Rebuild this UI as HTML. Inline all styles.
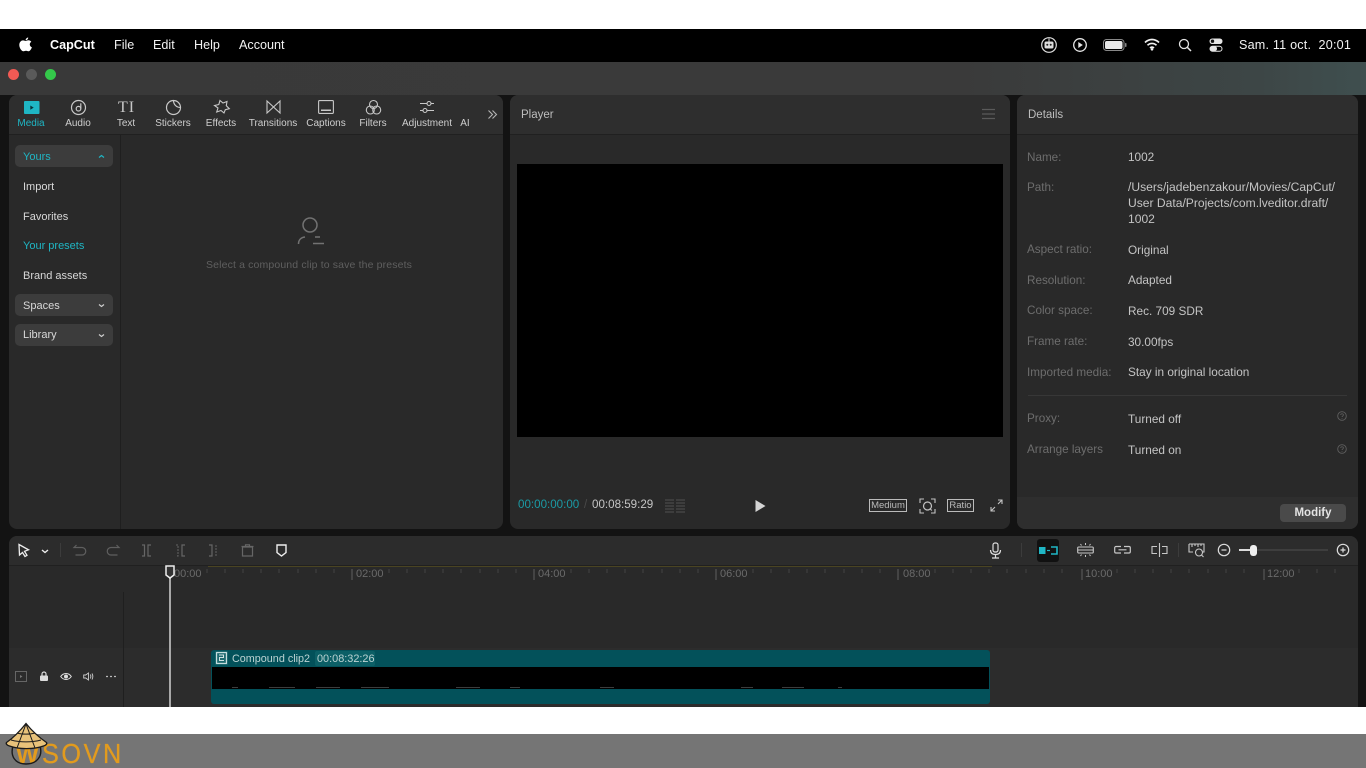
<!DOCTYPE html>
<html><head><meta charset="utf-8">
<style>
html,body{margin:0;padding:0;background:#fff;}
#r{position:relative;width:1366px;height:768px;overflow:hidden;background:#fff;font-family:"Liberation Sans",sans-serif;}
#r div,#r span.a,#r svg.a{position:absolute;}
.t{white-space:nowrap;line-height:14px;}
.m{font-size:12.6px;color:#f2f2f2;top:38px;line-height:14px;white-space:nowrap;}
.tab{font-size:10px;color:#cfcfcf;top:118px;width:70px;text-align:center;white-space:nowrap;line-height:12px;}
.side{font-size:11px;color:#d8d8d8;left:23px;line-height:13px;white-space:nowrap;}
.btn{left:15px;width:98px;height:22px;background:#3c3c3c;border-radius:5px;}
.k{font-size:11.7px;color:#6d6d6d;left:1027px;line-height:14px;white-space:nowrap;margin-top:1px;}
.v{font-size:11.8px;color:#c4c4c4;left:1128px;line-height:16px;white-space:nowrap;}
.tl{font-size:11px;color:#6a6a6a;top:568px;line-height:12px;white-space:nowrap;}
svg{fill:none;overflow:visible;}
</style></head><body>
<div id="r">
<div style="left:0;top:29px;width:1366px;height:33px;background:#000"></div>
<div style="left:0;top:62px;width:1366px;height:33px;background:linear-gradient(90deg,#393939 0%,#3a3a3a 70%,#3d4646 92%,#3f4f4f 100%)"></div>
<div style="left:0;top:95px;width:1366px;height:612px;background:#131313"></div>

<svg class="a" style="left:18px;top:37px" width="15" height="15" viewBox="0 0 15 15"><path fill="#fff" d="M10.2 0.5c.1 1.2-1 2.8-2.6 2.8C7.5 2 8.8.6 10.2.5zM7.6 4c.8 0 1.6-.7 2.9-.7 1 0 2.1.5 2.8 1.5-2.3 1.4-1.9 4.6.6 5.6-.6 1.6-2 3.9-3.3 3.9-1 0-1.4-.6-2.6-.6s-1.7.6-2.6.6C3.500 14.300 1.300 10.800 1.300 8c0-2.900 1.900-4.600 3.700-4.600 1.100 0 2 .6 2.600.6z"/></svg>
<div class="m" style="left:50px;font-weight:bold;color:#fff">CapCut</div>
<div class="m" style="left:114px">File</div>
<div class="m" style="left:153px">Edit</div>
<div class="m" style="left:194px">Help</div>
<div class="m" style="left:239px">Account</div>

<svg class="a" style="left:1040px;top:36px" width="18" height="18" viewBox="0 0 18 18"><circle cx="9" cy="9" r="7.300" stroke="#ddd" stroke-width="1.200"/><path d="M9 2.500v3" stroke="#ddd"/><rect x="4.500" y="5.500" width="9" height="7" rx="1.500" fill="#ddd"/><circle cx="7.300" cy="8.800" r="1" fill="#222"/><circle cx="10.700" cy="8.800" r="1" fill="#222"/></svg>
<svg class="a" style="left:1072px;top:37px" width="16" height="16" viewBox="0 0 16 16"><circle cx="8" cy="8" r="6.300" stroke="#e5e5e5" stroke-width="1.300"/><path d="M6.300 5l4.500 3-4.500 3z" fill="#e5e5e5"/></svg>
<svg class="a" style="left:1103px;top:39px" width="24" height="12" viewBox="0 0 24 12"><rect x=".5" y=".5" width="20.500" height="11" rx="3" stroke="#888"/><rect x="2" y="2" width="17.500" height="8" rx="1.800" fill="#e8e8e8"/><rect x="22" y="4" width="1.500" height="4" rx=".7" fill="#888"/></svg>
<svg class="a" style="left:1144px;top:38px" width="16" height="13" viewBox="0 0 16 13"><path d="M1 4.500c4-4 10-4 14 0M3.500 7.300c2.600-2.500 6.400-2.500 9 0M6 10c1.200-1 2.800-1 4 0" stroke="#f0f0f0" stroke-width="1.700"/><circle cx="8" cy="11.300" r="1.300" fill="#f0f0f0"/></svg>
<svg class="a" style="left:1178px;top:38px" width="14" height="14" viewBox="0 0 14 14"><circle cx="6" cy="6" r="4.500" stroke="#e5e5e5" stroke-width="1.300"/><path d="M9.300 9.300l3.700 3.700" stroke="#e5e5e5" stroke-width="1.500"/></svg>
<svg class="a" style="left:1209px;top:38px" width="14" height="14" viewBox="0 0 14 14"><rect x=".5" y=".5" width="13" height="5.500" rx="2.700" fill="#e5e5e5"/><circle cx="3.500" cy="3.200" r="1.700" fill="#111"/><rect x="1" y="8.200" width="12" height="5" rx="2.500" stroke="#e5e5e5"/><rect x="1" y="8.200" width="7" height="5" rx="2.500" fill="#e5e5e5"/></svg>
<div class="m" style="left:1239px;letter-spacing:.2px">Sam. 11 oct.&nbsp; 20:01</div>

<div style="left:8px;top:69px;width:11px;height:11px;border-radius:50%;background:#f25a54"></div>
<div style="left:26px;top:69px;width:11px;height:11px;border-radius:50%;background:#5a5a5a"></div>
<div style="left:45px;top:69px;width:11px;height:11px;border-radius:50%;background:#34c84a"></div>

<!-- media panel -->
<div style="left:9px;top:95px;width:494px;height:434px;background:#292929;border-radius:8px"></div>
<div style="left:9px;top:95px;width:494px;height:39px;background:#2e2e2e;border-radius:8px 8px 0 0;border-bottom:1px solid #202020"></div>
<div style="left:120px;top:135px;width:1px;height:394px;background:#1f1f1f"></div>

<svg class="a" style="left:24px;top:101px" width="16" height="13" viewBox="0 0 16 13"><rect width="15.500" height="13" rx="1" fill="#1fb6c4"/><path d="M6.300 4.500l3.400 2.100-3.400 2.100z" fill="#0c3338"/></svg>
<svg class="a" style="left:70px;top:99px" width="17" height="17" viewBox="0 0 17 17"><circle cx="8.500" cy="8.500" r="7" stroke="#c8c8c8" stroke-width="1.200"/><circle cx="8.500" cy="9.700" r="2.300" stroke="#c8c8c8" stroke-width="1.200"/><path d="M10.800 9.500V4.300" stroke="#c8c8c8" stroke-width="1.200"/></svg>
<div class="a t" style="left:118px;top:99px;font-family:'Liberation Serif',serif;font-size:16px;line-height:17px;color:#c8c8c8;letter-spacing:1px">TI</div>
<svg class="a" style="left:165px;top:99px" width="17" height="17" viewBox="0 0 17 17"><path d="M8.500 1.500a7 7 0 1 0 7 7c-4 0-7-3-7-7zM8.500 1.500a7 7 0 0 1 7 7" stroke="#c8c8c8" stroke-width="1.200"/></svg>
<svg class="a" style="left:213px;top:99px" width="18" height="17" viewBox="0 0 18 17"><path d="M7 1.500l3 2.500 4-1.500-.7 4.200 3 3-4 1-1.300 3.300-3-2.500-4.300 1.500 1.300-4-3.500-2.500 4.300-1z" stroke="#c8c8c8" stroke-width="1.100"/></svg>
<svg class="a" style="left:266px;top:100px" width="15" height="14" viewBox="0 0 15 14"><path d="M1 1v12l6.500-6zM14 1v12L7.500 7z" stroke="#c8c8c8" stroke-width="1.100"/></svg>
<svg class="a" style="left:318px;top:100px" width="16" height="14" viewBox="0 0 16 14"><rect x=".6" y=".6" width="14.800" height="12.800" rx="1" stroke="#c8c8c8" stroke-width="1.100"/><path d="M3 9.500h10v1.500H3z" fill="#c8c8c8"/></svg>
<svg class="a" style="left:365px;top:99px" width="17" height="17" viewBox="0 0 17 17"><circle cx="8.500" cy="5.500" r="4" stroke="#c8c8c8" stroke-width="1.100"/><circle cx="5.300" cy="11" r="4" stroke="#c8c8c8" stroke-width="1.100"/><circle cx="11.700" cy="11" r="4" stroke="#c8c8c8" stroke-width="1.100"/></svg>
<svg class="a" style="left:419px;top:99px" width="16" height="16" viewBox="0 0 16 16"><path d="M1 4.500h7M12 4.500h3M1 11.500h3M8 11.500h7" stroke="#c8c8c8" stroke-width="1.100"/><circle cx="10" cy="4.500" r="2" stroke="#c8c8c8" stroke-width="1.100"/><circle cx="6" cy="11.500" r="2" stroke="#c8c8c8" stroke-width="1.100"/></svg>
<svg class="a" style="left:487px;top:109px" width="11" height="11" viewBox="0 0 11 11"><path d="M1.500 1.500l4 4-4 4M5.500 1.500l4 4-4 4" stroke="#b5b5b5" stroke-width="1.100"/></svg>

<div class="tab" style="left:-4px;color:#1fb6c4">Media</div>
<div class="tab" style="left:43px">Audio</div>
<div class="tab" style="left:91px">Text</div>
<div class="tab" style="left:138px">Stickers</div>
<div class="tab" style="left:186px">Effects</div>
<div class="tab" style="left:238px">Transitions</div>
<div class="tab" style="left:291px">Captions</div>
<div class="tab" style="left:338px">Filters</div>
<div class="tab" style="left:392px">Adjustment</div>
<div class="tab" style="left:430px">AI</div>

<div class="btn" style="top:145px"></div>
<div class="btn" style="top:294px"></div>
<div class="btn" style="top:324px"></div>
<div class="side" style="top:151px;color:#1fb6c4">Yours</div>
<div class="side" style="top:181px">Import</div>
<div class="side" style="top:211px">Favorites</div>
<div class="side" style="top:240px;color:#1fb6c4">Your presets</div>
<div class="side" style="top:270px">Brand assets</div>
<div class="side" style="top:300px">Spaces</div>
<div class="side" style="top:329px">Library</div>
<svg class="a" style="left:98px;top:154px" width="7" height="5" viewBox="0 0 7 5"><path d="M1 3.500l2.500-2 2.500 2" stroke="#1fb6c4" stroke-width="1.200"/></svg>
<svg class="a" style="left:98px;top:303px" width="7" height="5" viewBox="0 0 7 5"><path d="M1 1.500l2.500 2 2.500-2" stroke="#cfcfcf" stroke-width="1.200"/></svg>
<svg class="a" style="left:98px;top:333px" width="7" height="5" viewBox="0 0 7 5"><path d="M1 1.500l2.500 2 2.500-2" stroke="#cfcfcf" stroke-width="1.200"/></svg>

<svg class="a" style="left:297px;top:216px" width="28" height="30" viewBox="0 0 28 30"><circle cx="13" cy="9" r="7" stroke="#727272" stroke-width="1.500"/><path d="M1.500 28c0-4 2.500-6.500 6.500-7M18 21h5M16 27.500h11" stroke="#727272" stroke-width="1.500"/></svg>
<div class="a t" style="left:206px;top:258px;font-size:10.500px;color:#5f5f5f;letter-spacing:.14px">Select a compound clip to save the presets</div>

<!-- player -->
<div style="left:510px;top:95px;width:500px;height:434px;background:#292929;border-radius:8px"></div>
<div style="left:510px;top:95px;width:500px;height:39px;background:#2e2e2e;border-radius:8px 8px 0 0;border-bottom:1px solid #202020"></div>
<div class="a t" style="left:521px;top:108px;font-size:11.500px;color:#bdbdbd">Player</div>
<svg class="a" style="left:982px;top:108px" width="13" height="12" viewBox="0 0 13 12"><path d="M0 1.500h13M0 6h13M0 10.500h13" stroke="#5a5a5a" stroke-width="1.200"/></svg>
<div style="left:517px;top:164px;width:486px;height:273px;background:#000"></div>
<div class="a t" style="left:518px;top:498px;font-size:11.600px;color:#1b9aa5">00:00:00:00</div>
<div class="a t" style="left:584px;top:498px;font-size:11.500px;color:#4a4a4a">/</div>
<div class="a t" style="left:592px;top:498px;font-size:11.600px;color:#c4c4c4">00:08:59:29</div>
<svg class="a" style="left:664px;top:498px" width="22" height="16" viewBox="0 0 22 16"><path d="M1 2h9M1 5h9M1 8h9M1 11h9M1 14h9M12 2h9M12 5h9M12 8h9M12 11h9M12 14h9" stroke="#444" stroke-width="1.500"/></svg>
<svg class="a" style="left:755px;top:500px" width="11" height="12" viewBox="0 0 11 12"><path d="M.5 0l10 6-10 6z" fill="#d5d5d5"/></svg>
<div class="a t" style="left:869px;top:499px;width:36px;height:11px;border:1px solid #bbb;font-size:9.500px;line-height:11px;color:#bbb;text-align:center">Medium</div>
<svg class="a" style="left:919px;top:498px" width="17" height="16" viewBox="0 0 17 16"><path d="M1 5V1h4M12 1h4v4M16 11v4h-4M5 15H1v-4" stroke="#c4c4c4" stroke-width="1.100"/><circle cx="8.500" cy="8" r="4" stroke="#c4c4c4" stroke-width="1.200"/><path d="M10.800 10.500l2 2" stroke="#c4c4c4" stroke-width="1.100"/></svg>
<div class="a t" style="left:947px;top:499px;width:25px;height:11px;border:1px solid #bbb;font-size:9.500px;line-height:11px;color:#bbb;text-align:center">Ratio</div>
<svg class="a" style="left:990px;top:499px" width="13" height="13" viewBox="0 0 13 13"><path d="M8 1h4v4M12 1L8 5M5 12H1V8M1 12l4-4" stroke="#c4c4c4" stroke-width="1.100"/></svg>

<!-- details -->
<div style="left:1017px;top:95px;width:341px;height:434px;background:#292929;border-radius:8px"></div>
<div style="left:1017px;top:95px;width:341px;height:39px;background:#2e2e2e;border-radius:8px 8px 0 0;border-bottom:1px solid #202020"></div>
<div style="left:1017px;top:497px;width:341px;height:32px;background:#2e2e2e;border-radius:0 0 8px 8px"></div>
<div class="a t" style="left:1028px;top:108px;font-size:11.500px;color:#bdbdbd">Details</div>
<div class="k" style="top:150px">Name:</div><div class="v" style="top:149px">1002</div>
<div class="k" style="top:180px">Path:</div>
<div class="v" style="top:179px;font-size:12.1px">/Users/jadebenzakour/Movies/CapCut/<br>User Data/Projects/com.lveditor.draft/<br>1002</div>
<div class="k" style="top:242px">Aspect ratio:</div><div class="v" style="top:242px">Original</div>
<div class="k" style="top:273px">Resolution:</div><div class="v" style="top:272px">Adapted</div>
<div class="k" style="top:303px">Color space:</div><div class="v" style="top:303px">Rec. 709 SDR</div>
<div class="k" style="top:334px">Frame rate:</div><div class="v" style="top:334px">30.00fps</div>
<div class="k" style="top:365px">Imported media:</div><div class="v" style="top:364px">Stay in original location</div>
<div style="left:1028px;top:395px;width:319px;height:1px;background:#373737"></div>
<div class="k" style="top:411px">Proxy:</div><div class="v" style="top:411px">Turned off</div>
<div class="k" style="top:442px">Arrange layers</div><div class="v" style="top:442px">Turned on</div>
<svg class="a" style="left:1337px;top:411px" width="10" height="10" viewBox="0 0 10 10"><circle cx="5" cy="5" r="4.300" stroke="#5f5f5f" stroke-width=".9"/><path d="M3.700 4c0-1.700 2.700-1.700 2.700 0 0 1-1.400 1-1.400 2M5 7v.8" stroke="#5f5f5f" stroke-width=".8"/></svg>
<svg class="a" style="left:1337px;top:444px" width="10" height="10" viewBox="0 0 10 10"><circle cx="5" cy="5" r="4.300" stroke="#5f5f5f" stroke-width=".9"/><path d="M3.700 4c0-1.700 2.700-1.700 2.700 0 0 1-1.400 1-1.400 2M5 7v.8" stroke="#5f5f5f" stroke-width=".8"/></svg>
<div class="a t" style="left:1280px;top:504px;width:66px;height:18px;line-height:18px;background:#4a4a4a;border-radius:4px;color:#e4e4e4;font-size:11.500px;font-weight:bold;text-align:center">Modify</div>

<!-- timeline -->
<div style="left:9px;top:536px;width:1349px;height:171px;background:#292929;border-radius:8px 8px 0 0"></div>
<div style="left:9px;top:536px;width:1349px;height:29px;background:#2c2c2c;border-radius:8px 8px 0 0;border-bottom:1px solid #202020"></div>
<div style="left:9px;top:648px;width:1349px;height:59px;background:#2c2c2c"></div>
<div style="left:123px;top:592px;width:1px;height:115px;background:#1f1f1f"></div>
<div style="left:208px;top:566px;width:784px;height:1px;background:#4a4422"></div>

<svg class="a" style="left:17px;top:543px" width="14" height="15" viewBox="0 0 14 15"><path d="M2 1.500l9.500 5.300-4 1.500 2.500 4-2 1.200-2.500-4-3 2.500z" stroke="#eee" stroke-width="1.300"/></svg>
<svg class="a" style="left:41px;top:549px" width="8" height="5" viewBox="0 0 8 5"><path d="M1 1l3 2.500L7 1" stroke="#eee" stroke-width="1.400"/></svg>
<div style="left:60px;top:543px;width:1px;height:14px;background:#3c3c3c"></div>
<svg class="a" style="left:73px;top:544px" width="13" height="12" viewBox="0 0 13 12"><path d="M3.500 1L1 3.500h8a3.500 3.500 0 0 1 0 7.500H2.500" stroke="#5f5f5f" stroke-width="1.200"/></svg>
<svg class="a" style="left:107px;top:544px" width="13" height="12" viewBox="0 0 13 12"><path d="M9.500 1L12 3.500H4a3.500 3.500 0 0 0 0 7.500h6.500" stroke="#5f5f5f" stroke-width="1.200"/></svg>
<svg class="a" style="left:141px;top:544px" width="11" height="13" viewBox="0 0 11 13"><path d="M1 1h2.500v11H1M10 1H7v11h3" stroke="#666" stroke-width="1.200"/></svg>
<svg class="a" style="left:175px;top:544px" width="11" height="13" viewBox="0 0 11 13"><path d="M1 1h2v11H1" stroke="#5a5a5a" stroke-width="1.200" stroke-dasharray="2 1"/><path d="M10 1H7v11h3" stroke="#666" stroke-width="1.200"/></svg>
<svg class="a" style="left:208px;top:544px" width="11" height="13" viewBox="0 0 11 13"><path d="M1 1h3v11H1" stroke="#666" stroke-width="1.200"/><path d="M8 1v11" stroke="#5a5a5a" stroke-width="1.200" stroke-dasharray="2 1"/></svg>
<svg class="a" style="left:241px;top:544px" width="13" height="13" viewBox="0 0 13 13"><path d="M1.500 3h10v9h-10zM.5 2.500h12M4.500 2.500V.8h4v1.700" stroke="#666" stroke-width="1.200"/></svg>
<svg class="a" style="left:276px;top:544px" width="11" height="13" viewBox="0 0 11 13"><path d="M1 1h9v7.500L5.500 12 1 8.500z" stroke="#eee" stroke-width="1.400"/></svg>

<svg class="a" style="left:989px;top:542px" width="13" height="17" viewBox="0 0 13 17"><rect x="4" y="1" width="5" height="9" rx="2" stroke="#ddd" stroke-width="1.200"/><path d="M1.500 8c0 3 2 4.500 5 4.500s5-1.500 5-4.500M6.500 12.500V16M3 16h7" stroke="#ddd" stroke-width="1.200"/></svg>
<div style="left:1021px;top:543px;width:1px;height:14px;background:#3c3c3c"></div>
<div style="left:1037px;top:539px;width:22px;height:23px;background:#111;border-radius:3px"></div>
<svg class="a" style="left:1039px;top:546px" width="19" height="9" viewBox="0 0 19 9"><rect x="0" y="1" width="6.500" height="7" fill="#1fb6c4"/><path d="M8 4.500h3" stroke="#1fb6c4" stroke-width="1.200"/><path d="M12 1h6v7h-6" stroke="#1fb6c4" stroke-width="1.600"/></svg>
<svg class="a" style="left:1077px;top:542px" width="17" height="16" viewBox="0 0 17 16"><rect x=".7" y="5" width="15.600" height="6" rx="1" stroke="#c8c8c8" stroke-width="1.100"/><path d="M8.500 1v2M8.500 13v2M3.500 2l1 1.500M13.500 2l-1 1.500M3.500 14l1-1.500M13.500 14l-1-1.500M1 8h15" stroke="#c8c8c8"/></svg>
<svg class="a" style="left:1114px;top:545px" width="17" height="10" viewBox="0 0 17 10"><path d="M7 1.500H2a1.300 1.300 0 0 0-1.300 1.300v4A1.300 1.300 0 0 0 2 8h5M10 1.500h5a1.300 1.300 0 0 1 1.300 1.300v4A1.300 1.300 0 0 1 15 8h-5M4.500 4.800h8" stroke="#c8c8c8" stroke-width="1.200"/></svg>
<svg class="a" style="left:1151px;top:542px" width="17" height="16" viewBox="0 0 17 16"><path d="M8.500 1v14M6 4.500H1v7h5M11 4.500h5v7h-5" stroke="#c8c8c8" stroke-width="1.100"/></svg>
<div style="left:1178px;top:543px;width:1px;height:14px;background:#3c3c3c"></div>
<svg class="a" style="left:1188px;top:543px" width="18" height="15" viewBox="0 0 18 15"><path d="M1 1h15v8H8M1 1v8h4M4 1v3M7 1v2M10 1v3M13 1v2" stroke="#c8c8c8" stroke-width="1.100"/><circle cx="11" cy="9.500" r="3.500" stroke="#c8c8c8" stroke-width="1.100" fill="#2c2c2c"/><path d="M13.500 12l2 2" stroke="#c8c8c8" stroke-width="1.100"/></svg>
<svg class="a" style="left:1217px;top:543px" width="14" height="14" viewBox="0 0 14 14"><circle cx="7" cy="7" r="5.700" stroke="#ddd" stroke-width="1.200"/><path d="M4.500 7h5" stroke="#ddd" stroke-width="1.200"/></svg>
<div style="left:1239px;top:549px;width:89px;height:2px;background:#3e3e3e"></div>
<div style="left:1239px;top:549px;width:12px;height:2px;background:#ddd"></div>
<div style="left:1250px;top:545px;width:7px;height:11px;border-radius:3px;background:#eee"></div>
<svg class="a" style="left:1336px;top:543px" width="14" height="14" viewBox="0 0 14 14"><circle cx="7" cy="7" r="5.700" stroke="#ddd" stroke-width="1.200"/><path d="M4.500 7h5M7 4.500v5" stroke="#ddd" stroke-width="1.200"/></svg>

<svg class="a" style="left:0;top:566px" width="1366" height="16"><path stroke="#444" d="M207 3v4M225 3v4M243 3v4M261 3v4M279 3v4M298 3v4M316 3v4M334 3v4M389 3v4M407 3v4M425 3v4M443 3v4M461 3v4M480 3v4M498 3v4M516 3v4M571 3v4M589 3v4M607 3v4M625 3v4M643 3v4M662 3v4M680 3v4M698 3v4M753 3v4M771 3v4M789 3v4M807 3v4M825 3v4M844 3v4M862 3v4M880 3v4M935 3v4M953 3v4M971 3v4M989 3v4M1007 3v4M1026 3v4M1044 3v4M1062 3v4M1117 3v4M1135 3v4M1153 3v4M1171 3v4M1189 3v4M1208 3v4M1226 3v4M1244 3v4M1299 3v4M1317 3v4M1335 3v4"/><path stroke="#5f5f5f" d="M352 3v11M534 3v11M716 3v11M898 3v11M1082 3v11M1264 3v11"/></svg>
<div class="tl" style="left:174px">00:00</div>
<div class="tl" style="left:356px">02:00</div>
<div class="tl" style="left:538px">04:00</div>
<div class="tl" style="left:720px">06:00</div>
<div class="tl" style="left:903px">08:00</div>
<div class="tl" style="left:1085px">10:00</div>
<div class="tl" style="left:1267px">12:00</div>

<div style="left:169px;top:578px;width:2px;height:129px;background:#a8a8a8"></div>
<svg class="a" style="left:165px;top:565px" width="10" height="14" viewBox="0 0 10 14"><path d="M1 1h8v9l-4 3-4-3z" stroke="#eee" stroke-width="1.500" fill="#333"/></svg>

<svg class="a" style="left:15px;top:671px" width="13" height="12" viewBox="0 0 13 12"><rect x=".5" y=".5" width="11" height="10" stroke="#666"/><path d="M5 4l2.500 1.500L5 7z" fill="#777"/></svg>
<svg class="a" style="left:39px;top:671px" width="10" height="11" viewBox="0 0 10 11"><rect x="1" y="4.500" width="8" height="5.500" rx="1" fill="#ddd"/><path d="M3 4.500V3a2 2 0 0 1 4 0v1.500" stroke="#ddd" stroke-width="1.200"/></svg>
<svg class="a" style="left:60px;top:672px" width="12" height="9" viewBox="0 0 12 9"><path d="M.7 4.500C3.500.5 8.500.5 11.300 4.500 8.500 8.500 3.500 8.500.7 4.500z" stroke="#ddd"/><circle cx="6" cy="4.500" r="2" fill="#ddd"/></svg>
<svg class="a" style="left:83px;top:672px" width="11" height="9" viewBox="0 0 11 9"><path d="M.7 3h2L5.500 1v7L2.700 6h-2z" stroke="#ccc" stroke-width=".9"/><path d="M7.300 2.500c.7 1.200.7 2.800 0 4M9 1.500c1 1.800 1 4.200 0 6" stroke="#ccc" stroke-width=".9"/></svg>
<svg class="a" style="left:106px;top:675px" width="10" height="3" viewBox="0 0 10 3"><path d="M0 1.500h2M4 1.500h2M8 1.500h2" stroke="#bbb" stroke-width="1.300"/></svg>

<!-- clip -->
<div style="left:211px;top:650px;width:779px;height:54px;background:#03515a;border-radius:3px"></div>
<div style="left:212px;top:667px;width:777px;height:22px;background:#000"></div>
<div style="left:215px;top:651px;width:13px;height:14px;background:#1d6a70;border-radius:2px"></div>
<svg class="a" style="left:216px;top:652px" width="11" height="12" viewBox="0 0 11 12"><rect x=".6" y=".6" width="9.800" height="10.800" stroke="#cfe3e3" stroke-width="1.100"/><path d="M3 3h4.500v2.500H3.500V8.500H8" stroke="#cfe3e3"/></svg>
<div class="a t" style="left:232px;top:652px;font-size:10.800px;color:#bcd3d3">Compound clip2</div>
<div style="left:315px;top:651px;width:60px;height:15px;background:#0c5f66;border-radius:2px"></div>
<div class="a t" style="left:317px;top:652px;font-size:10.900px;color:#bcd3d3">00:08:32:26</div>
<svg class="a" style="left:0;top:685px" width="1366" height="4"><path stroke="#3d3d3d" d="M232 2.500h6M269 2.500h26M316 2.500h24M361 2.500h28M456 2.500h24M510 2.500h10M600 2.500h14M741 2.500h12M782 2.500h22M838 2.500h4"/></svg>

<!-- bottom -->
<div style="left:0;top:707px;width:1366px;height:27px;background:#fff"></div>
<div style="left:0;top:734px;width:1366px;height:34px;background:#757575"></div>
<div class="a t" style="left:16px;top:743px;font-size:24px;line-height:26px;color:#e29b1e;font-weight:bold">W</div>
<div class="a t" style="left:42px;top:739px;font-size:28px;line-height:30px;color:#e29b1e;letter-spacing:2.900px;transform:scaleX(.9);transform-origin:0 50%;-webkit-text-stroke:.3px #e29b1e">SOVN</div>
<svg class="a" style="left:4px;top:722px" width="50" height="46" viewBox="0 0 50 46"><path d="M9 24c-3 10 2 18 13 18s17-8 14-18" stroke="#1a1a1a" stroke-width="1.400"/><path d="M22 1.500C16 9 9 16 2.500 20.500c-1 1.500 1 3 3 3.500 10 3.500 24 3.500 34 0 2-.5 4-2 3-3.500C36 16 28 9 22 1.500z" fill="#e8c27a" stroke="#1a1a1a" stroke-width="1.300"/><path d="M22 2l-9 24M22 2l9 24M13 11c5 1.500 13 1.500 18 0M7 18c9 2.500 21 2.500 30 0" stroke="#1a1a1a" stroke-width="1"/></svg>
</div>
</body></html>
